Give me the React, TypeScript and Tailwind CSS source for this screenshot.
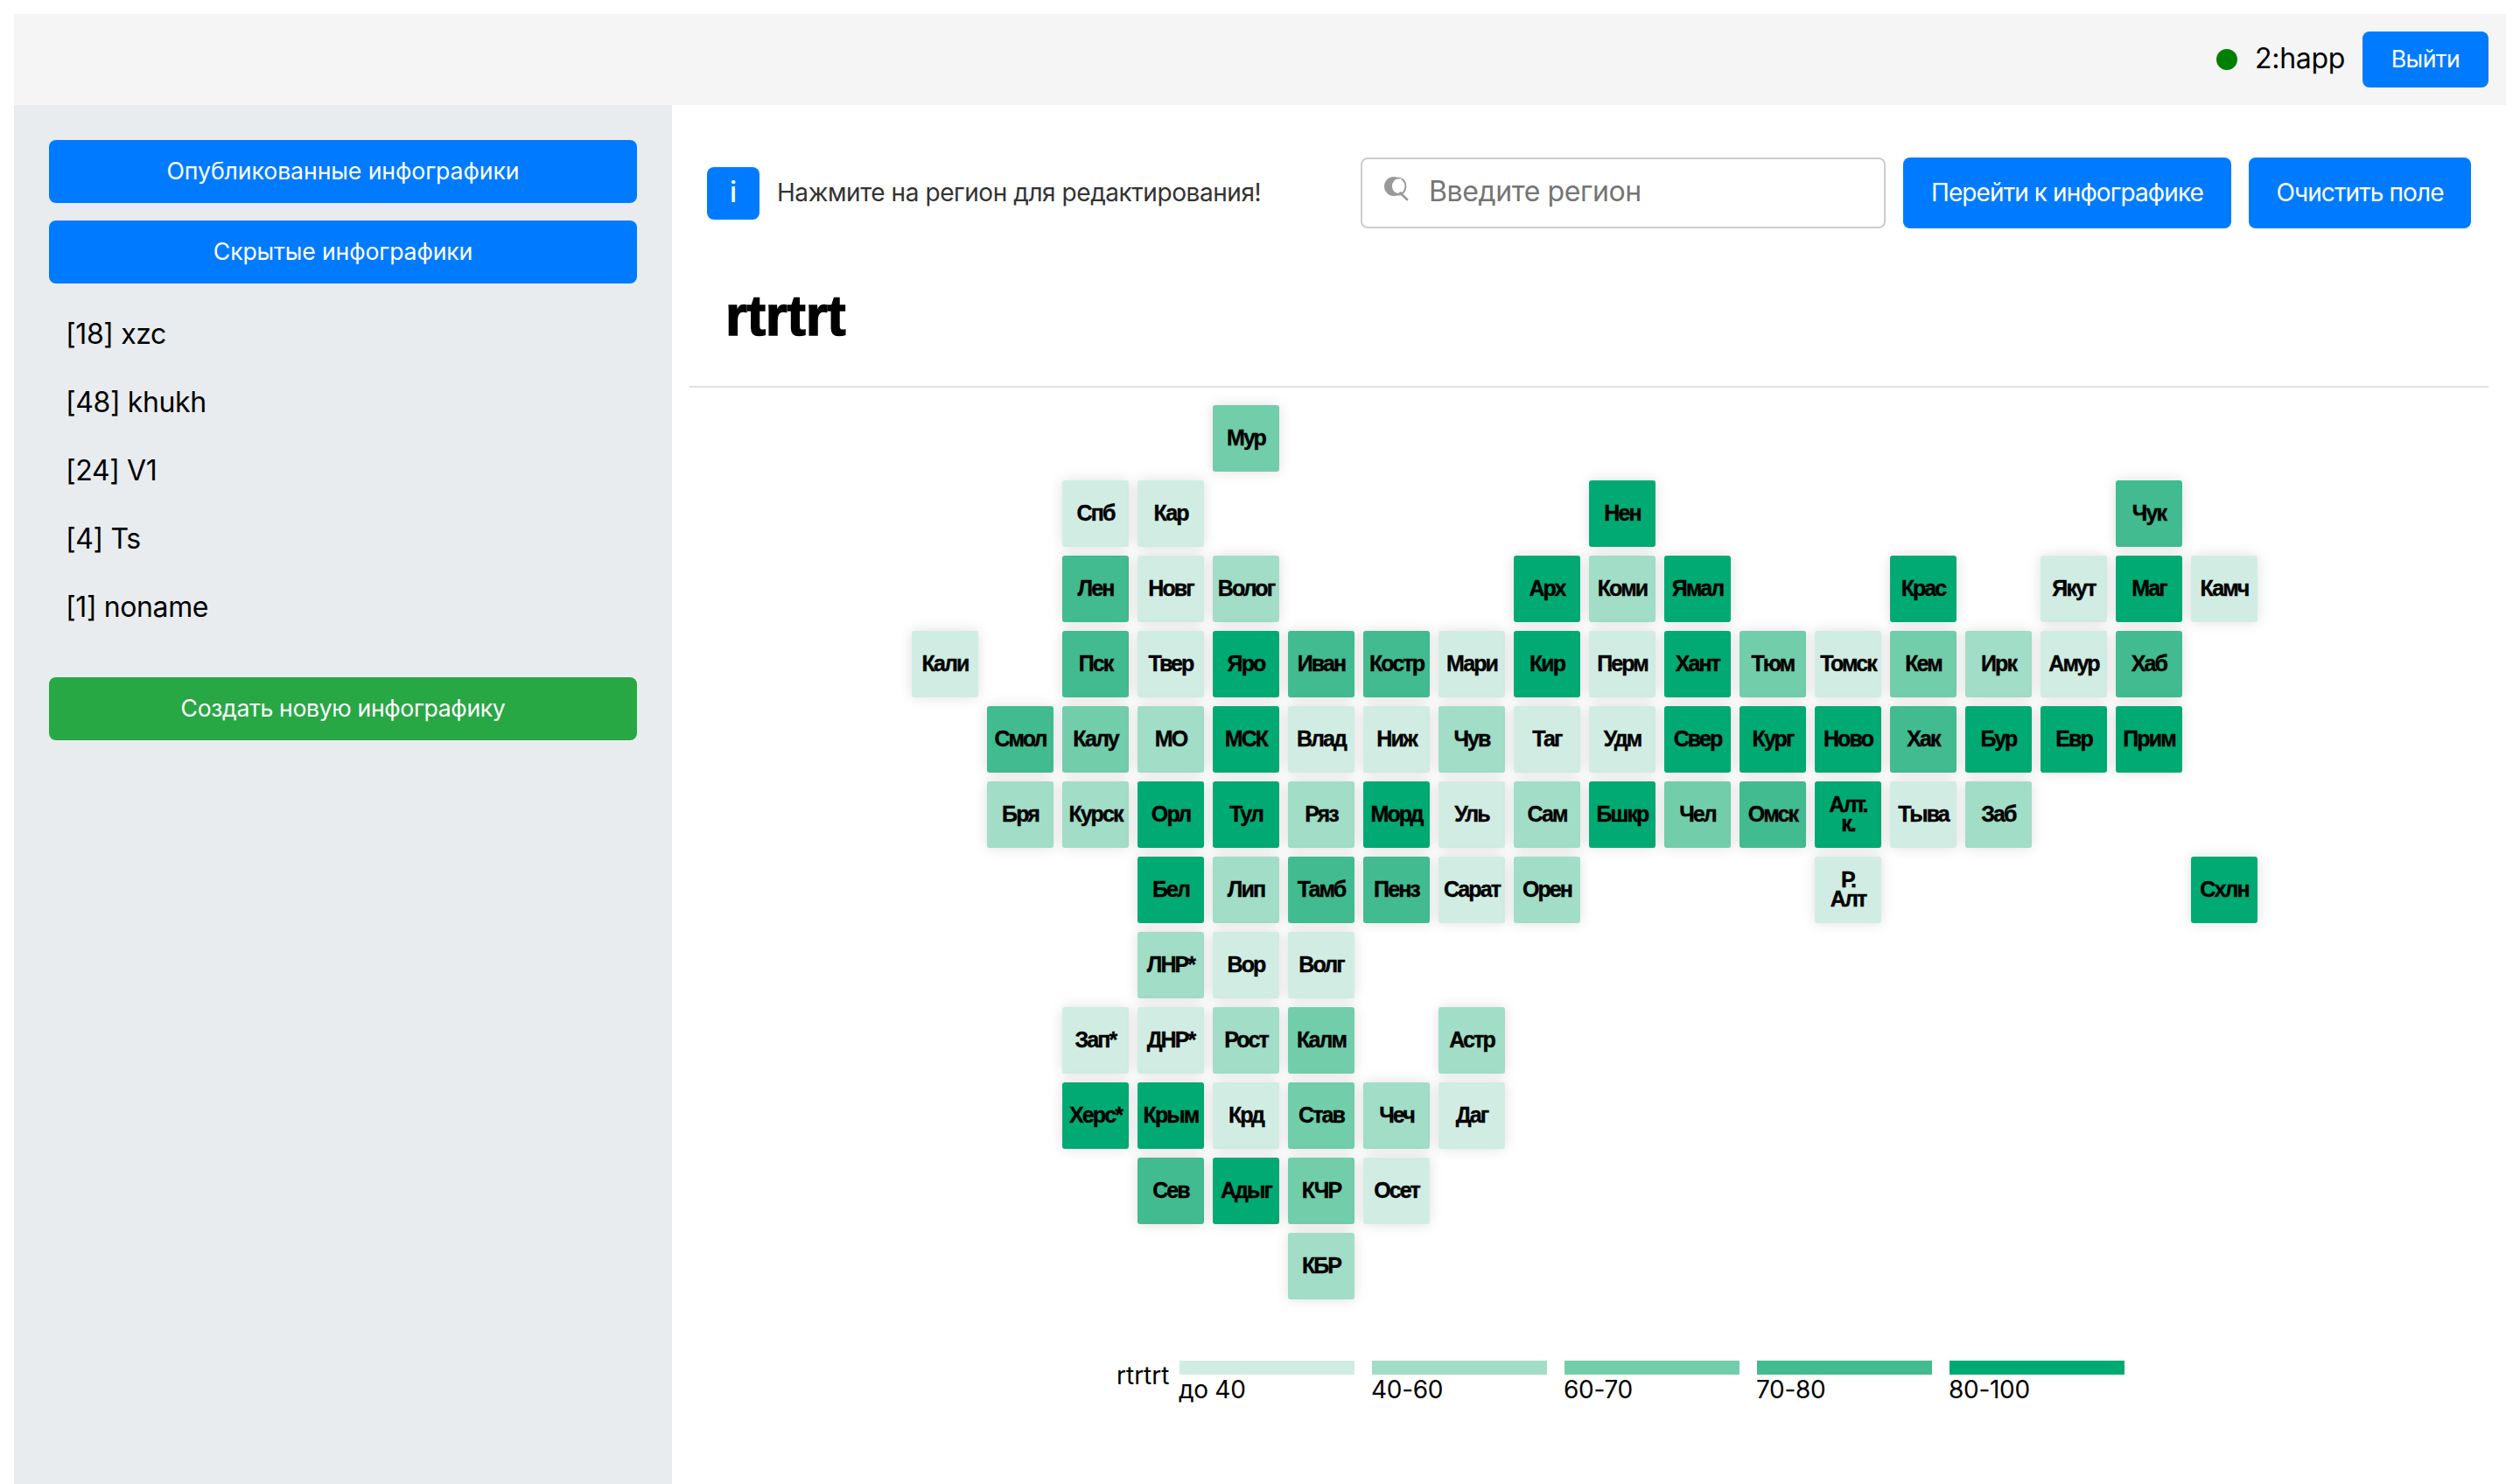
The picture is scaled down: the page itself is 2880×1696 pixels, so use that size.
import type { ReactNode } from "react";

const LEVELS = ["bg-[#d1ede3]", "bg-[#a1ddc7]", "bg-[#72cdaa]", "bg-[#42bb90]", "bg-[#02aa73]"];

type Cell = [name: string, level: number] | null;
const _ = null;

const MAP: Cell[][] = [
  [_, _, _, _, ["Мур", 2]],
  [_, _, ["Спб", 0], ["Кар", 0], _, _, _, _, _, ["Нен", 4], _, _, _, _, _, _, ["Чук", 3]],
  [_, _, ["Лен", 3], ["Новг", 0], ["Волог", 1], _, _, _, ["Арх", 4], ["Коми", 1], ["Ямал", 4], _, _, ["Крас", 4], _, ["Якут", 0], ["Маг", 4], ["Камч", 0]],
  [["Кали", 0], _, ["Пск", 3], ["Твер", 0], ["Яро", 4], ["Иван", 3], ["Костр", 3], ["Мари", 0], ["Кир", 4], ["Перм", 0], ["Хант", 4], ["Тюм", 2], ["Томск", 0], ["Кем", 2], ["Ирк", 1], ["Амур", 0], ["Хаб", 3]],
  [_, ["Смол", 3], ["Калу", 2], ["МО", 1], ["МСК", 4], ["Влад", 0], ["Ниж", 0], ["Чув", 1], ["Таг", 0], ["Удм", 0], ["Свер", 4], ["Кург", 4], ["Ново", 4], ["Хак", 3], ["Бур", 4], ["Евр", 4], ["Прим", 4]],
  [_, ["Бря", 1], ["Курск", 1], ["Орл", 4], ["Тул", 4], ["Ряз", 1], ["Морд", 4], ["Уль", 0], ["Сам", 1], ["Бшкр", 4], ["Чел", 2], ["Омск", 3], ["Алт. к.", 4], ["Тыва", 0], ["Заб", 1]],
  [_, _, _, ["Бел", 4], ["Лип", 1], ["Тамб", 3], ["Пенз", 3], ["Сарат", 0], ["Орен", 1], _, _, _, ["Р. Алт", 0], _, _, _, _, ["Схлн", 4]],
  [_, _, _, ["ЛНР*", 1], ["Вор", 0], ["Волг", 0]],
  [_, _, ["Зап*", 0], ["ДНР*", 0], ["Рост", 1], ["Калм", 2], _, ["Астр", 1]],
  [_, _, ["Херс*", 4], ["Крым", 4], ["Крд", 0], ["Став", 2], ["Чеч", 1], ["Даг", 0]],
  [_, _, _, ["Сев", 3], ["Адыг", 4], ["КЧР", 2], ["Осет", 0]],
  [_, _, _, _, _, ["КБР", 1]],
];

const ITEMS = ["[18] xzc", "[48] khukh", "[24] V1", "[4] Ts", "[1] noname"];
const LEGEND = ["до 40", "40-60", "60-70", "70-80", "80-100"];

function Button({ className, children }: { className: string; children: ReactNode }) {
  return (
    <button className={`flex shrink-0 items-center justify-center rounded-lg whitespace-nowrap text-white ${className}`}>
      {children}
    </button>
  );
}

function SearchIcon() {
  return (
    <svg className="h-7 w-7 shrink-0" viewBox="0 0 28 28" fill="none">
      <ellipse cx="16.4" cy="11" rx="8" ry="9.6" stroke="#999" strokeWidth="2" />
      <circle cx="11" cy="11" r="11" fill="#999" />
      <ellipse cx="15.8" cy="10.7" rx="6.8" ry="8.2" fill="#fff" />
      <path d="M17 3 20 2.2" stroke="#fff" strokeWidth="1" />
      <path d="M18.3 18.6 26 26" stroke="#999" strokeWidth="2.8" strokeLinecap="round" />
    </svg>
  );
}

function Tile({ name, level }: { name: string; level: number }) {
  return (
    <div className={`flex size-[76px] items-center justify-center rounded-[3px] shadow-[0_0_16px_rgba(0,0,0,0.13)] ${LEVELS[level]}`}>
      <span className="flex flex-col items-center pb-0.5 font-['Liberation_Sans',sans-serif] text-[25px] leading-[22px] font-bold tracking-[-1.9px] text-black [-webkit-text-stroke:0.4px_black]">
        {name.split(" ").map((part) => (
          <span key={part}>{part}</span>
        ))}
      </span>
    </div>
  );
}

export default function App() {
  return (
    <div className="flex h-[1696px] w-[2880px] flex-col overflow-hidden bg-white px-4 pt-4 font-[Inter,sans-serif] text-black">
      <header className="flex h-[104px] shrink-0 items-center justify-end gap-5 bg-[#f5f5f5] px-5">
        <span className="size-6 rounded-full bg-[#008000]" />
        <span className="w-[103px] pb-0.5 text-[32px] leading-10 tracking-[-0.3px]">2:happ</span>
        <Button className="h-16 w-36 bg-[#007bff] pb-0.5 text-[26.67px] tracking-[-0.6px]">Выйти</Button>
      </header>

      <div className="flex min-h-0 grow">
        <aside className="w-[752px] shrink-0 bg-[#e8ecef] px-10 pt-10">
          <div className="flex w-[672px] flex-col gap-5">
            <Button className="h-[72px] bg-[#007bff] pb-[3px] text-[26.67px] tracking-[-0.1px]">Опубликованные инфографики</Button>
            <Button className="h-[72px] bg-[#007bff] pb-[3px] text-[26.67px] tracking-[-0.15px]">Скрытые инфографики</Button>
          </div>
          <ul className="mt-5 pl-[19px]">
            {ITEMS.map((item) => (
              <li key={item} className="flex h-[78px] items-center pb-0.5 text-[32px] tracking-[-0.4px]">
                {item}
              </li>
            ))}
          </ul>
          <Button className="mt-10 h-[72px] w-[672px] bg-[#28a745] pb-[3px] text-[26.67px] tracking-[-0.38px]">Создать новую инфографику</Button>
        </aside>

        <main className="flex grow flex-col px-5">
          <section className="mt-[60px] flex h-[81px] items-center px-5">
            <span className="flex size-15 shrink-0 items-center justify-center rounded-lg bg-[#007bff] pb-0.5 text-[32px] font-medium text-white">i</span>
            <p className="ml-5 grow pb-px text-[28px] tracking-[-0.44px] text-[#333]">Нажмите на регион для редактирования!</p>
            <div className="flex h-[81px] w-[600px] shrink-0 items-center rounded-lg border-2 border-[#ccc] pl-[25px]">
              <span className="pb-2.5">
                <SearchIcon />
              </span>
              <span className="ml-[23px] pb-[3px] text-[32px] tracking-[-0.4px] text-[#757575]">Введите регион</span>
            </div>
            <Button className="ml-5 h-[81px] w-[375px] bg-[#007bff] pb-px text-[28px] tracking-[-0.9px]">Перейти к инфографике</Button>
            <Button className="ml-5 h-[81px] w-[254px] bg-[#007bff] pb-px text-[28px] tracking-[-0.9px]">Очистить поле</Button>
          </section>

          <h1 className="flex h-[182px] items-center border-b-2 border-[#e0e0e0] pt-5 pl-[41px] font-['Liberation_Sans',sans-serif] text-[64px] leading-none font-bold tracking-[-0.2px] [-webkit-text-stroke:1.5px_black]">
            rtrtrt
          </h1>

          <section className="mt-5 flex flex-col gap-2.5 pl-[254px]">
            {MAP.map((row, y) => (
              <div key={y} className="flex h-[76px] gap-2.5">
                {row.map((cell, x) => (cell ? <Tile key={x} name={cell[0]} level={cell[1]} /> : <div key={x} className="size-[76px]" />))}
              </div>
            ))}
          </section>

          <footer className="mt-[70px] flex pl-[488px] text-[28px] leading-8">
            <span className="w-[72px] pt-px">rtrtrt</span>
            <div className="flex gap-5">
              {LEGEND.map((label, i) => (
                <div key={label} className="w-[200px]">
                  <div className={`h-4 ${LEVELS[i]}`} />
                  <span className="-ml-px block pt-px tracking-[-0.3px]">{label}</span>
                </div>
              ))}
            </div>
          </footer>
        </main>
      </div>
    </div>
  );
}
